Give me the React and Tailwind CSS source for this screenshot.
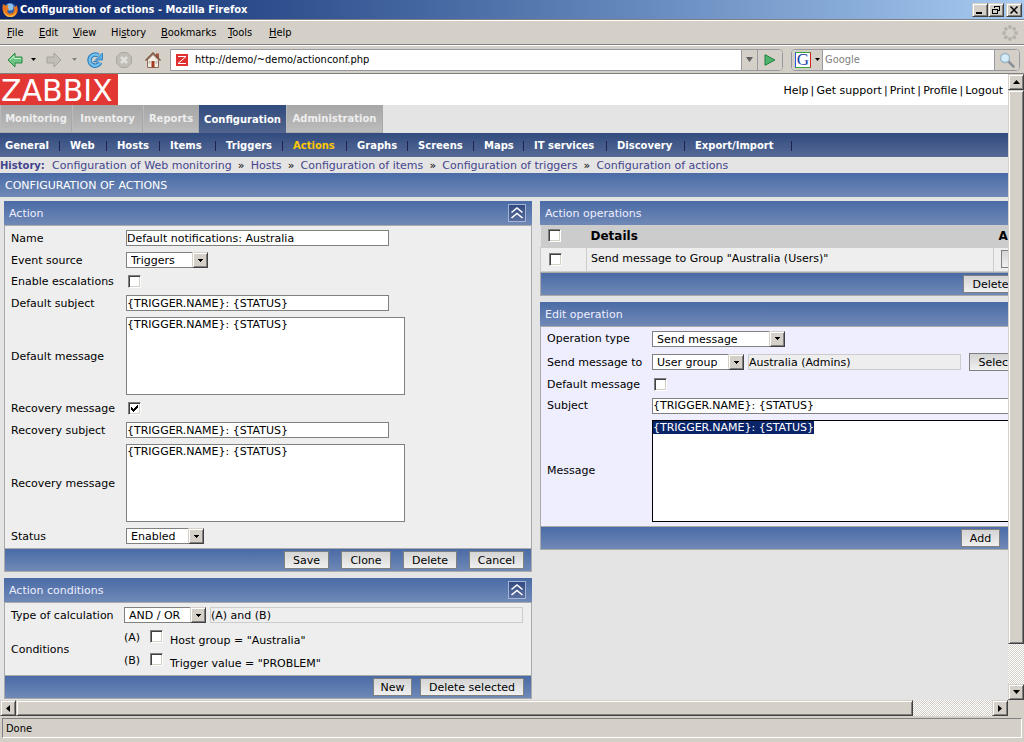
import clsx from "clsx";

const tahoma = "font-['DejaVu_Sans_Condensed','DejaVu_Sans',sans-serif]";
const verdana = "font-['Verdana','DejaVu_Sans',sans-serif]";

const bevel =
  "border border-t-[#d4d0c8] border-l-[#d4d0c8] border-r-[#404040] border-b-[#404040] bg-[#d4d0c8] shadow-[inset_1px_1px_0_#fff,inset_-1px_-1px_0_#808080]";
const blueBar = "bg-linear-to-b from-[#4a6ba6] to-[#7089b6] text-[#eef]";
const buttonClass =
  "h-[18px] shrink-0 border border-[#808080] bg-linear-to-b from-[#d4d4d4] to-[#f0f0f0] pt-px text-[11px] leading-4 text-black text-center whitespace-nowrap";
const inputClass =
  "h-4 border border-[#808080] bg-white text-[11px] leading-3 text-black outline-none";
const readOnlyClass =
  "h-4 border border-[#ccc] bg-[#eee] text-[11px] leading-3 text-black outline-none";
const tracks =
  "bg-[#fff] bg-[conic-gradient(#d4d0c8_25%,#fff_0_50%,#d4d0c8_0_75%,#fff_0)] bg-[length:2px_2px]";

const menus = [
  { before: "", key: "F", after: "ile", width: "w-8" },
  { before: "", key: "E", after: "dit", width: "w-[34px]" },
  { before: "", key: "V", after: "iew", width: "w-[38px]" },
  { before: "Hi", key: "s", after: "tory", width: "w-[50px]" },
  { before: "", key: "B", after: "ookmarks", width: "w-[67px]" },
  { before: "", key: "T", after: "ools", width: "w-[41px]" },
  { before: "", key: "H", after: "elp", width: "w-8" },
];

const tabs = [
  { label: "Monitoring", width: "w-[72px]" },
  { label: "Inventory", width: "w-[71px]" },
  { label: "Reports", width: "w-14" },
  { label: "Configuration", width: "w-[87px]", active: true },
  { label: "Administration", width: "w-[97px]" },
];

const submenu = [
  { label: "General", width: "w-[44px]" },
  { label: "Web", width: "w-[26px]" },
  { label: "Hosts", width: "w-[32px]" },
  { label: "Items", width: "w-[35px]" },
  { label: "Triggers", width: "w-[46px]" },
  { label: "Actions", width: "w-[43px]", active: true },
  { label: "Graphs", width: "w-[40px]" },
  { label: "Screens", width: "w-[45px]" },
  { label: "Maps", width: "w-[29px]" },
  { label: "IT services", width: "w-[62px]" },
  { label: "Discovery", width: "w-[57px]" },
  { label: "Export/Import", width: "w-[86px]" },
];

const crumbs = [
  "Configuration of Web monitoring",
  "Hosts",
  "Configuration of items",
  "Configuration of triggers",
  "Configuration of actions",
];

function Checkbox({ id, label, checked }) {
  return (
    <span className="relative block size-[13px] shrink-0">
      <input
        id={id}
        type="checkbox"
        aria-label={label}
        defaultChecked={checked}
        className="peer block size-[13px] appearance-none border border-t-[#808080] border-l-[#808080] border-r-white border-b-white bg-white shadow-[inset_1px_1px_0_#404040,inset_-1px_-1px_0_#d4d0c8]"
      />
      <svg
        viewBox="0 0 13 13"
        className="pointer-events-none absolute inset-0 hidden size-[13px] peer-checked:block"
        shapeRendering="crispEdges"
      >
        <path d="M3 5h1v1h1v1h1v-1h1v-1h1v-1h1v-1h1v3h-1v1h-1v1h-1v1h-1v1h-1v-1h-1v-1h-1z" fill="#000" />
      </svg>
    </span>
  );
}

function Select({ id, label, value, width }) {
  return (
    <span className={clsx("relative block shrink-0", width)}>
      <select
        id={id}
        aria-label={label}
        className="block h-4 w-full appearance-none border border-[#808080] bg-white pt-px pr-4 pl-1 text-[11px] leading-[13px] text-black outline-none"
      >
        <option>{value}</option>
      </select>
      <span className={clsx(bevel, "pointer-events-none absolute top-0 right-0 flex size-4 items-center justify-center")}>
        <svg viewBox="0 0 5 3" className="h-[3px] w-[5px]" shapeRendering="crispEdges">
          <path d="M0 0h5v1h-1v1h-1v1h-1v-1h-1v-1h-1z" />
        </svg>
      </span>
    </span>
  );
}

function Row({ label, htmlFor, height, labelWidth, children }) {
  return (
    <div className={clsx("flex items-center", height)}>
      <label htmlFor={htmlFor} className={clsx("shrink-0 whitespace-nowrap pt-px text-[11px] leading-4", labelWidth)}>
        {label}
      </label>
      {children}
    </div>
  );
}

function CollapseButton() {
  return (
    <button type="button" aria-label="Collapse" className="size-[18px] border border-[#a5b4d4] bg-linear-to-b from-[#324a80] to-[#5a6f9f]">
      <svg viewBox="0 0 16 16" className="size-4" fill="none" stroke="#fff" strokeWidth="1.6">
        <path d="M2.500 7.500L8 3l5.500 4.500M2.500 13L8 8.500l5.500 4.500" />
      </svg>
    </button>
  );
}

function PanelHeader({ title, collapsible }) {
  return (
    <div className={clsx(blueBar, "flex h-6 items-center justify-between pr-1.5 pl-[5px]")}>
      <h2 className="pt-0.5 text-[11px] leading-4">{title}</h2>
      {collapsible && <CollapseButton />}
    </div>
  );
}

function PanelFooter({ children }) {
  return (
    <div className={clsx(blueBar, "flex h-6 items-center justify-end gap-3 border border-[#aaa] pr-[7px]")}>
      {children}
    </div>
  );
}

function FirefoxLogo() {
  return (
    <svg viewBox="0 0 16 16" className="size-4">
      <circle cx="8" cy="8" r="7" fill="#2f5fa8" />
      <circle cx="8" cy="5" r="3.500" fill="#8fc3ea" />
      <path d="M1 2c1 .5 2 1 2.500 2 1-.8 2.200-.8 3-.5L5.500 5.500 7 7c-1 1-2 1.500-1.500 3 1 2 4 2 5.500.5 1.500-1.500 1.500-4 .5-6 2 .5 2.500 1 2.500-1.500 2 2 2.500 6 .5 9-2.500 3.700-8 4-11.500 1C.3 10.300 0 6 1 2z" fill="#e8741c" />
      <path d="M2 8c.5 3.500 3 5.500 6.500 5.500 3 0 5-2 5.500-4.500.5 4-2.500 6-6 6S1.500 11.500 2 8z" fill="#fbbf3c" />
    </svg>
  );
}

function TitleBar() {
  const windowButton = clsx(bevel, "flex h-[14px] w-4 items-center justify-center");
  return (
    <div className="flex h-[19px] shrink-0 items-center bg-linear-to-r from-[#0a246a] to-[#a6caf0] pr-0.5 pl-0.5">
      <FirefoxLogo />
      <h1 className="flex-1 pl-0.5 text-[11px] leading-4 font-bold whitespace-nowrap text-white">
        Configuration of actions - Mozilla Firefox
      </h1>
      <button type="button" aria-label="Minimize" className={windowButton}>
        <svg viewBox="0 0 12 10" className="h-2.5 w-3" shapeRendering="crispEdges">
          <path d="M2 7h6v2H2z" />
        </svg>
      </button>
      <button type="button" aria-label="Restore" className={windowButton}>
        <svg viewBox="0 0 12 10" className="h-2.5 w-3" fill="none" stroke="#000" shapeRendering="crispEdges">
          <path d="M4.500 3V1.500h5v4H8M4 1h6M2.500 4.500h5v4h-5zM2 4.500h6" />
        </svg>
      </button>
      <button type="button" aria-label="Close" className={clsx(windowButton, "ml-0.5")}>
        <svg viewBox="0 0 12 10" className="h-2.5 w-3" stroke="#000" strokeWidth="1.500">
          <path d="M2.500 1.500l7 7M9.500 1.500l-7 7" />
        </svg>
      </button>
    </div>
  );
}

function MenuBar() {
  return (
    <div className="flex h-[26px] shrink-0 items-center border-t border-b border-t-[#808080] border-b-[#808080] pt-px pr-1.5 pl-[7px] shadow-[inset_0_1px_0_#fff]">
      <nav className="flex flex-1 text-[11px] leading-4">
        {menus.map((menu) => (
          <button key={menu.key + menu.after} type="button" className={clsx("text-left whitespace-nowrap", menu.width)}>
            {menu.before}
            <span className="underline">{menu.key}</span>
            {menu.after}
          </button>
        ))}
      </nav>
      <svg viewBox="0 0 16 16" className="size-4" fill="#b5b2ac">
        <circle cx="8" cy="2" r="1.900" />
        <circle cx="12.200" cy="3.800" r="1.900" />
        <circle cx="14" cy="8" r="1.900" />
        <circle cx="12.200" cy="12.200" r="1.900" />
        <circle cx="8" cy="14" r="1.900" />
        <circle cx="3.800" cy="12.200" r="1.900" />
        <circle cx="2" cy="8" r="1.900" />
        <circle cx="3.800" cy="3.800" r="1.900" />
      </svg>
    </div>
  );
}

function DropArrow({ color }) {
  return (
    <svg viewBox="0 0 5 3" className="h-[3px] w-[5px]" fill={color}>
      <path d="M0 0h5L2.500 3z" />
    </svg>
  );
}

function Toolbar() {
  return (
    <div className="flex h-[29px] shrink-0 items-center border-t border-b border-t-white border-b-[#808080] pr-1 pl-[7px]">
      <button type="button" aria-label="Back">
        <svg viewBox="0 0 16 16" className="size-4">
          <path d="M1 8l7-7v4h7v6H8v4z" fill="#6cc482" stroke="#2d8a47" strokeLinejoin="round" />
          <path d="M3 8l4-4v2.500h7" fill="none" stroke="#c8f0cc" />
        </svg>
      </button>
      <button type="button" aria-label="Back history" className="ml-2">
        <DropArrow color="#000" />
      </button>
      <button type="button" aria-label="Forward" className="ml-2.5">
        <svg viewBox="0 0 16 16" className="size-4">
          <path d="M15 8L8 1v4H1v6h7v4z" fill="#c2bfb8" stroke="#a5a29c" strokeLinejoin="round" />
        </svg>
      </button>
      <button type="button" aria-label="Forward history" className="ml-2.5">
        <DropArrow color="#808080" />
      </button>
      <button type="button" aria-label="Reload" className="ml-2.5">
        <svg viewBox="0 0 16 16" className="size-4" fill="none">
          <path d="M13.200 10.500A5.600 5.600 0 1 1 11.500 3.600" stroke="#2478bd" strokeWidth="4.400" />
          <path d="M13.200 10.500A5.600 5.600 0 1 1 11.500 3.600" stroke="#74c0ee" strokeWidth="2.400" />
          <path d="M15.500 1v7H8.500z" fill="#5aade4" stroke="#2478bd" strokeWidth=".8" />
          <path d="M6.500 9.500h4" stroke="#2478bd" strokeWidth="1.500" />
        </svg>
      </button>
      <button type="button" aria-label="Stop" className="ml-[13px]">
        <svg viewBox="0 0 16 16" className="size-4">
          <path d="M5 .500h6L15.500 5v6L11 15.500H5L.500 11V5z" fill="#c0bdb7" stroke="#aaa7a1" />
          <path d="M5 5l6 6M11 5l-6 6" stroke="#e2e0db" strokeWidth="2.500" />
        </svg>
      </button>
      <button type="button" aria-label="Home" className="ml-[13px]">
        <svg viewBox="0 0 16 16" className="size-4">
          <path d="M11 1.500h3V6h-3z" fill="#a0573c" />
          <path d="M2.500 8L8 2.500 13.500 8v7.500h-11z" fill="#f3eee4" stroke="#8b6b58" />
          <path d="M.500 8.500L8 1l7.500 7.500" fill="none" stroke="#7c5240" strokeWidth="1.400" />
          <path d="M6.500 9h3v6.500h-3z" fill="#a63d20" />
          <path d="M10.500 9h2v2.500h-2zM3.500 9h2v2.500h-2z" fill="#c3bdb4" />
        </svg>
      </button>

      {/* Address bar */}
      <div className="ml-[9px] flex h-[22px] flex-1 items-center rounded-r-sm border border-[#9898a0] bg-white">
        <svg viewBox="0 0 12 12" className="ml-[5px] size-3">
          <path d="M0 0h12v12H0z" fill="#e03030" />
          <path d="M2 2.500h8L2 9.500h8" fill="none" stroke="#fff" />
        </svg>
        <input
          aria-label="Address"
          defaultValue="http://demo/~demo/actionconf.php"
          className="min-w-0 flex-1 bg-white pt-px pl-[7px] text-[11px] leading-4 outline-none"
        />
        <button type="button" aria-label="Address history" className="flex h-full w-4 items-center justify-center border-l border-[#9898a0] bg-[#d4d0c8]">
          <svg viewBox="0 0 7 5" className="h-[5px] w-[7px]" fill="#606060">
            <path d="M0 0h7L3.500 5z" />
          </svg>
        </button>
        <button type="button" aria-label="Go" className="flex h-full w-[25px] items-center justify-center rounded-r-sm border-l border-[#9898a0] bg-[#d4d0c8]">
          <svg viewBox="0 0 12 12" className="size-3">
            <path d="M1 .700L11 6 1 11.300z" fill="#4db36c" stroke="#23803f" />
          </svg>
        </button>
      </div>

      {/* Search bar */}
      <div className="ml-2 flex h-[22px] w-[229px] items-center rounded-sm border border-[#9898a0] bg-white">
        <button type="button" aria-label="Search engine" className="flex h-full w-[31px] items-center gap-1 rounded-l-sm border-r border-[#9898a0] bg-[#d4d0c8] pl-[3px]">
          <span className="flex size-4 items-center justify-center border border-t-[#3aa63a] border-r-[#e02020] border-b-[#3aa63a] border-l-[#2a5bd7] bg-white font-['Liberation_Serif',serif] text-[17px] leading-4 text-[#1a3fa8]">
            G
          </span>
          <DropArrow color="#000" />
        </button>
        <input
          aria-label="Search"
          placeholder="Google"
          className="min-w-0 flex-1 bg-white pt-px pl-0.5 text-[11px] leading-4 outline-none placeholder:text-[#808080]"
        />
        <button type="button" aria-label="Search" className="flex h-full w-[25px] items-center justify-center rounded-r-sm border-l border-[#9898a0] bg-[#d4d0c8]">
          <svg viewBox="0 0 16 16" className="size-4">
            <path d="M9.500 9.500L14.500 14.500" stroke="#8a8f98" strokeWidth="2.500" strokeLinecap="round" />
            <circle cx="6" cy="6" r="4.500" fill="#d5ecf8" stroke="#9bb4c6" strokeWidth="1.300" />
          </svg>
        </button>
      </div>
    </div>
  );
}

function SiteHeader() {
  const links = ["Help", "Get support", "Print", "Profile", "Logout"];
  return (
    <header>
      <div className="flex h-[31px] justify-between bg-white pr-[5px]">
        <a href="#zabbix" className="block h-[31px] w-[118px] bg-[#e33734] pl-px text-[30px] leading-[33px] text-white">
          ZABBIX
        </a>
        <nav className="flex items-center pt-0.5 text-[11px] leading-4">
          {links.map((link, i) => (
            <span key={link} className="flex whitespace-nowrap">
              {i > 0 && <span className="w-2 text-center">|</span>}
              <a href={"#" + link}>{link}</a>
            </span>
          ))}
        </nav>
      </div>

      <nav className="flex h-7 text-[10px] leading-4 font-bold">
        {tabs.map((tab) => (
          <a
            key={tab.label}
            href={"#" + tab.label}
            className={clsx(
              "flex items-center justify-center pt-px whitespace-nowrap",
              tab.width,
              tab.active
                ? "bg-linear-to-b from-[#314b7e] to-[#51658f] text-white"
                : "border-r border-b border-l border-r-[#a8a8a8] border-b-[#aaa] border-l-[#bbb] bg-linear-to-b from-[#a6a6a6] to-[#bcbcbc] text-[#eee]"
            )}
          >
            {tab.label}
          </a>
        ))}
      </nav>

      <nav className="flex h-6 items-center bg-linear-to-b from-[#314b7e] to-[#566a96] pt-px pl-[5px] text-[10px] leading-4 font-bold text-white">
        {submenu.map((item) => (
          <div key={item.label} className="flex items-center">
            <a href={"#" + item.label} className={clsx("whitespace-nowrap", item.width, item.active && "text-[#ffc800]")}>
              {item.label}
            </a>
            <span className="mx-2.5 h-2.5 w-px bg-[#22224e]" />
          </div>
        ))}
      </nav>

      <div className="flex h-4 items-center pt-px text-[11px] leading-4 whitespace-nowrap text-[#44448c]">
        <b className="w-[52px] text-[10px]">History:</b>
        {crumbs.map((crumb, i) => (
          <span key={crumb} className="flex">
            {i > 0 && <span className="w-[19px] text-center text-black">»</span>}
            <a href={"#" + crumb}>{crumb}</a>
          </span>
        ))}
      </div>
    </header>
  );
}

function ActionPanel() {
  const row = { labelWidth: "w-[115px]" };
  return (
    <section>
      <PanelHeader title="Action" collapsible />
      <div className="border-x border-t border-[#aaa] bg-[#eee] px-1.5 py-px">
        <Row {...row} height="h-[22px]" label="Name" htmlFor="name">
          <input id="name" defaultValue="Default notifications: Australia" className={clsx(inputClass, "w-[263px]")} />
        </Row>
        <Row {...row} height="h-[22px]" label="Event source" htmlFor="source">
          <Select id="source" value="Triggers" width="w-[82px]" />
        </Row>
        <Row {...row} height="h-[21px]" label="Enable escalations" htmlFor="escalations">
          <div className="pl-0.5">
            <Checkbox id="escalations" />
          </div>
        </Row>
        <Row {...row} height="h-[22px]" label="Default subject" htmlFor="subject">
          <input id="subject" defaultValue="{TRIGGER.NAME}: {STATUS}" className={clsx(inputClass, "w-[263px]")} />
        </Row>
        <Row {...row} height="h-[84px]" label="Default message" htmlFor="message">
          <textarea id="message" defaultValue="{TRIGGER.NAME}: {STATUS}" className={clsx(inputClass, "h-[78px] w-[279px] resize-none leading-[13px]")} />
        </Row>
        <Row {...row} height="h-[21px]" label="Recovery message" htmlFor="recovery">
          <div className="pl-0.5">
            <Checkbox id="recovery" checked />
          </div>
        </Row>
        <Row {...row} height="h-[22px]" label="Recovery subject" htmlFor="recovery-subject">
          <input id="recovery-subject" defaultValue="{TRIGGER.NAME}: {STATUS}" className={clsx(inputClass, "w-[263px]")} />
        </Row>
        <Row {...row} height="h-[84px]" label="Recovery message" htmlFor="recovery-message">
          <textarea id="recovery-message" defaultValue="{TRIGGER.NAME}: {STATUS}" className={clsx(inputClass, "h-[78px] w-[279px] resize-none leading-[13px]")} />
        </Row>
        <Row {...row} height="h-[22px]" label="Status" htmlFor="status">
          <Select id="status" value="Enabled" width="w-[78px]" />
        </Row>
      </div>
      <PanelFooter>
        <button type="button" className={clsx(buttonClass, "w-[45px]")}>Save</button>
        <button type="button" className={clsx(buttonClass, "w-[50px]")}>Clone</button>
        <button type="button" className={clsx(buttonClass, "w-[54px]")}>Delete</button>
        <button type="button" className={clsx(buttonClass, "w-[55px]")}>Cancel</button>
      </PanelFooter>
    </section>
  );
}

function ConditionsPanel() {
  const conditions = [
    { id: "A", text: 'Host group = "Australia"' },
    { id: "B", text: 'Trigger value = "PROBLEM"' },
  ];
  return (
    <section>
      <PanelHeader title="Action conditions" collapsible />
      <div className="border-x border-t border-[#aaa] bg-[#eee] py-px pr-2 pl-1.5">
        <Row height="h-[22px]" labelWidth="w-[113px]" label="Type of calculation" htmlFor="calculation">
          <Select id="calculation" value="AND / OR" width="w-[82px]" />
          <input aria-label="Expression" readOnly defaultValue="(A) and (B)" className={clsx(readOnlyClass, "ml-1 min-w-0 flex-1")} />
        </Row>
        <div className="flex h-12 items-center text-[11px] leading-4">
          <span className="w-[113px] shrink-0">Conditions</span>
          <div>
            {conditions.map((condition) => (
              <div key={condition.id} className="flex h-[23px] items-start pt-[3px]">
                <span className="w-[26px]">({condition.id})</span>
                <Checkbox id={"condition-" + condition.id} />
                <label htmlFor={"condition-" + condition.id} className="pt-[3px] pl-[7px] whitespace-nowrap">
                  {condition.text}
                </label>
              </div>
            ))}
          </div>
        </div>
      </div>
      <PanelFooter>
        <div className="flex gap-2">
          <button type="button" className={clsx(buttonClass, "w-[39px]")}>New</button>
          <button type="button" className={clsx(buttonClass, "w-[104px]")}>Delete selected</button>
        </div>
      </PanelFooter>
    </section>
  );
}

function OperationsPanel() {
  return (
    <section>
      <PanelHeader title="Action operations" />
      <table className="w-full table-fixed border-collapse text-left text-[11px] leading-4">
        <thead>
          <tr className="h-[22px] bg-[#ccc] text-[12px]">
            <th className="w-[46px] pl-[7px]">
              <Checkbox id="all-operations" label="Select all" />
            </th>
            <th className="pl-1">Details</th>
            <th className="w-[82px] pl-[5px]">Action</th>
          </tr>
        </thead>
        <tbody>
          <tr className="h-6 bg-[#eee]">
            <td className="border border-[#ccc] pl-2">
              <Checkbox id="operation-1" label="Select operation" />
            </td>
            <td className="border border-[#ccc] pl-1">Send message to Group "Australia (Users)"</td>
            <td className="border border-[#ccc] pl-[7px]">
              <button type="button" className={clsx(buttonClass, "block w-10")}>Edit</button>
            </td>
          </tr>
        </tbody>
      </table>
      <PanelFooter>
        <button type="button" className={clsx(buttonClass, "w-[105px]")}>Delete selected</button>
      </PanelFooter>
    </section>
  );
}

function EditOperationPanel() {
  const row = { labelWidth: "w-[105px]" };
  return (
    <section>
      <PanelHeader title="Edit operation" />
      <div className="border-x border-t border-[#aaa] bg-[#eef] px-1.5 py-px">
        <Row {...row} height="h-[22px]" label="Operation type" htmlFor="operation-type">
          <Select id="operation-type" value="Send message" width="w-[133px]" />
        </Row>
        <Row {...row} height="h-[25px]" label="Send message to" htmlFor="send-to">
          <Select id="send-to" value="User group" width="w-[92px]" />
          <input aria-label="Recipient" readOnly defaultValue="Australia (Admins)" className={clsx(readOnlyClass, "ml-1 w-[213px]")} />
          <button type="button" className={clsx(buttonClass, "ml-2 w-[53px]")}>Select</button>
        </Row>
        <Row {...row} height="h-5" label="Default message" htmlFor="use-default">
          <div className="pl-0.5">
            <Checkbox id="use-default" />
          </div>
        </Row>
        <Row {...row} height="h-[22px]" label="Subject" htmlFor="operation-subject">
          <input id="operation-subject" defaultValue="{TRIGGER.NAME}: {STATUS}" className={clsx(inputClass, "min-w-0 flex-1")} />
        </Row>
        <Row {...row} height="h-[108px]" label="Message" htmlFor="operation-message">
          <textarea
            id="operation-message"
            autoFocus
            onFocus={(e) => e.target.select()}
            defaultValue="{TRIGGER.NAME}: {STATUS}"
            className="h-[102px] min-w-0 flex-1 resize-none border border-black bg-white text-[11px] leading-[13px] outline-none selection:bg-[#0a246a] selection:text-white"
          />
        </Row>
      </div>
      <PanelFooter>
        <button type="button" className={clsx(buttonClass, "w-[39px]")}>Add</button>
        <button type="button" className={clsx(buttonClass, "w-14")}>Cancel</button>
      </PanelFooter>
    </section>
  );
}

function VerticalScrollbar() {
  const end = clsx(bevel, "flex size-4 shrink-0 items-center justify-center");
  return (
    <div className={clsx("flex w-4 shrink-0 flex-col", tracks)}>
      <button type="button" aria-label="Scroll up" className={end}>
        <svg viewBox="0 0 7 4" className="h-1 w-[7px]"><path d="M3.500 0L7 4H0z" /></svg>
      </button>
      <div className={clsx(bevel, "grow-[554]")} />
      <div className="grow-[40]" />
      <button type="button" aria-label="Scroll down" className={end}>
        <svg viewBox="0 0 7 4" className="h-1 w-[7px]"><path d="M0 0h7L3.500 4z" /></svg>
      </button>
    </div>
  );
}

function HorizontalScrollbar() {
  const end = clsx(bevel, "flex size-4 shrink-0 items-center justify-center");
  return (
    <div className="flex h-4 shrink-0 pr-4">
      <div className={clsx("flex flex-1", tracks)}>
        <button type="button" aria-label="Scroll left" className={end}>
          <svg viewBox="0 0 4 7" className="h-[7px] w-1"><path d="M4 0v7L0 3.500z" /></svg>
        </button>
        <div className={clsx(bevel, "grow-[897]")} />
        <div className="grow-[79]" />
        <button type="button" aria-label="Scroll right" className={end}>
          <svg viewBox="0 0 4 7" className="h-[7px] w-1"><path d="M0 0l4 3.500L0 7z" /></svg>
        </button>
      </div>
    </div>
  );
}

export default function App() {
  return (
    <div className={clsx(tahoma, "flex h-screen flex-col overflow-hidden bg-[#d4d0c8] text-black")}>
      <TitleBar />
      <MenuBar />
      <Toolbar />

      <div className="flex min-h-0 flex-1">
        <div className={clsx(verdana, "min-w-0 flex-1 overflow-clip bg-[#e4e4e4]")}>
          <SiteHeader />
          <div className={clsx(blueBar, "flex h-6 items-center pt-px pl-[5px] text-[11px] leading-4 text-white")}>
            CONFIGURATION OF ACTIONS
          </div>
          <main className="grid min-w-[1080px] grid-cols-[528fr_536fr] items-start gap-2 px-1 pt-1">
            <div className="space-y-1.5">
              <ActionPanel />
              <ConditionsPanel />
            </div>
            <div className="space-y-1.5">
              <OperationsPanel />
              <EditOperationPanel />
            </div>
          </main>
        </div>
        <VerticalScrollbar />
      </div>

      <HorizontalScrollbar />
      <footer className="flex h-[26px] shrink-0 items-center px-0.5 pt-0.5 pb-1">
        <div className="h-5 flex-1 border border-t-[#808080] border-r-white border-b-white border-l-[#808080] pl-[3px] text-[11px] leading-5">
          Done
        </div>
      </footer>
    </div>
  );
}
